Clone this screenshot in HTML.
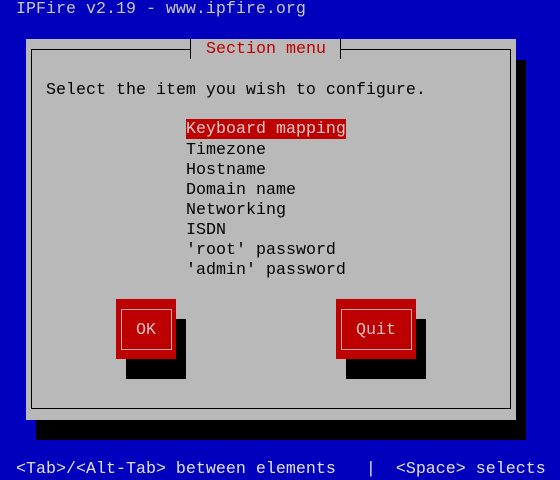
<!DOCTYPE html>
<html><head><style>
body{margin:0;width:560px;height:478px;background:#0000bd;position:relative;overflow:hidden;font-family:"Liberation Mono",monospace;font-size:16.67px;}
.t{position:absolute;line-height:20px;height:20px;white-space:pre;}
.b{position:absolute;}
</style></head><body>
<div class="t" style="left:16px;top:0px;color:#c8c8c8">IPFire v2.19 - www.ipfire.org</div>
<div class="b" style="left:36px;top:60px;width:490px;height:380px;background:#000"></div>
<div class="b" style="left:26px;top:39px;width:490px;height:381px;background:#b9b9b9"></div>
<div class="b" style="left:31px;top:49px;width:480px;height:360px;border:1px solid #000;box-sizing:border-box;border-right-color:#000"></div>
<div class="b" style="left:186px;top:40px;width:160px;height:20px;background:#b9b9b9"></div>
<div class="b" style="left:190px;top:39px;width:1px;height:20px;background:#000"></div>
<div class="b" style="left:180px;top:49px;width:10px;height:1px;background:#000"></div>
<div class="b" style="left:340px;top:39px;width:1px;height:20px;background:#000"></div>
<div class="b" style="left:341px;top:49px;width:10px;height:1px;background:#000"></div>
<div class="t" style="left:206px;top:40px;color:#c00000">Section menu</div>
<div class="t" style="left:46px;top:81px;color:#000">Select the item you wish to configure.</div>
<div class="b" style="left:186px;top:119px;width:160px;height:20px;background:#bd0000"></div>
<div class="t" style="left:186px;top:120px;color:#e0c8c8">Keyboard mapping</div>
<div class="t" style="left:186px;top:141px;color:#000;height:auto">Timezone
Hostname
Domain name
Networking
ISDN
'root' password
'admin' password</div>
<div class="b" style="left:126px;top:319px;width:60px;height:60px;background:#000"></div>
<div class="b" style="left:116px;top:299px;width:60px;height:60px;background:#bd0000"></div>
<div class="b" style="left:121px;top:309px;width:51px;height:41px;border:1px solid #d8a8b8;box-sizing:border-box"></div>
<div class="t" style="left:136px;top:321px;color:#e0c0c0">OK</div>
<div class="b" style="left:346px;top:319px;width:80px;height:60px;background:#000"></div>
<div class="b" style="left:336px;top:299px;width:80px;height:60px;background:#bd0000"></div>
<div class="b" style="left:341px;top:309px;width:71px;height:41px;border:1px solid #d8a8b8;box-sizing:border-box"></div>
<div class="t" style="left:356px;top:321px;color:#e0c0c0">Quit</div>
<div class="t" style="left:16px;top:460px;color:#e0e0e0">&lt;Tab&gt;/&lt;Alt-Tab&gt; between elements   |  &lt;Space&gt; selects</div>
</body></html>
